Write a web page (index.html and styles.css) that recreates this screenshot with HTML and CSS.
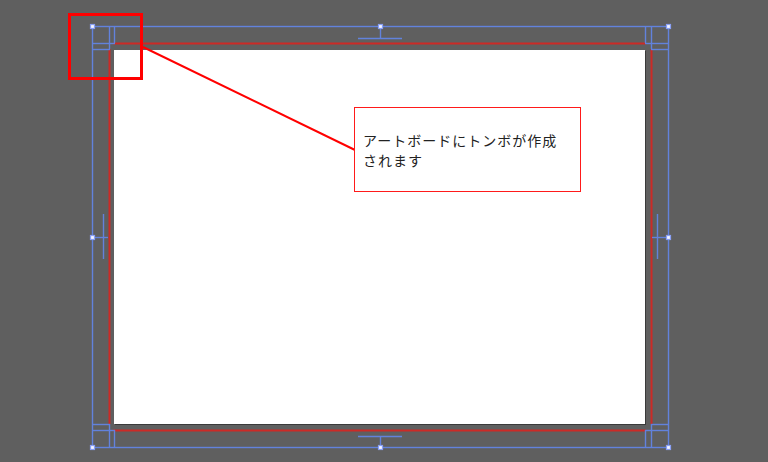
FILE: index.html
```
<!DOCTYPE html>
<html lang="ja">
<head>
  <meta charset="UTF-8" />
  <title>トンボ</title>
  <link rel="stylesheet" href="styles.css">
</head>
<body>
  <div class="stage">
    <svg class="canvas" width="768" height="462" viewBox="0 0 768 462">
      <!-- artboard -->
      <rect x="115" y="51" width="531" height="374" fill="#3a3a3a" />
      <rect x="114" y="50" width="531" height="374" fill="#ffffff" />

      <!-- bleed (red) -->
      <g stroke="#cc2a26" stroke-width="2" fill="none">
        <line x1="113" y1="43.5" x2="646" y2="43.5" />
        <line x1="113" y1="430.5" x2="646" y2="430.5" />
        <line x1="109.5" y1="49" x2="109.5" y2="424" />
        <line x1="651.5" y1="49" x2="651.5" y2="424" />
      </g>

      <!-- crop marks (blue) -->
      <g stroke="#6282dc" stroke-width="1.4" fill="none">
        <rect x="92.5" y="26.5" width="576" height="421" />

        <line x1="114.5" y1="26" x2="114.5" y2="43" />
        <line x1="109.5" y1="26" x2="109.5" y2="49" />
        <line x1="92" y1="43.5" x2="115" y2="43.5" />
        <line x1="92" y1="49.5" x2="110" y2="49.5" />

        <line x1="645.5" y1="26" x2="645.5" y2="43" />
        <line x1="651.5" y1="26" x2="651.5" y2="49" />
        <line x1="645" y1="43.5" x2="668" y2="43.5" />
        <line x1="651" y1="49.5" x2="668" y2="49.5" />

        <line x1="92" y1="424.5" x2="110" y2="424.5" />
        <line x1="92" y1="430.5" x2="115" y2="430.5" />
        <line x1="109.5" y1="424" x2="109.5" y2="447" />
        <line x1="114.5" y1="430" x2="114.5" y2="447" />

        <line x1="651" y1="424.5" x2="668" y2="424.5" />
        <line x1="645" y1="430.5" x2="668" y2="430.5" />
        <line x1="651.5" y1="424" x2="651.5" y2="447" />
        <line x1="645.5" y1="430" x2="645.5" y2="447" />

        <line x1="358" y1="38.5" x2="402" y2="38.5" />
        <line x1="380.5" y1="26" x2="380.5" y2="38" />
        <line x1="358" y1="436.5" x2="402" y2="436.5" />
        <line x1="380.5" y1="436" x2="380.5" y2="447" />

        <line x1="103.5" y1="214" x2="103.5" y2="259" />
        <line x1="92" y1="237.5" x2="108" y2="237.5" />
        <line x1="657.5" y1="214" x2="657.5" y2="259" />
        <line x1="652" y1="237.5" x2="668" y2="237.5" />
      </g>

      <!-- handles -->
      <g fill="#f4f6ff" stroke="#8aa0f4" stroke-width="1.2">
        <rect x="90.5" y="24.5" width="4" height="4" />
        <rect x="378.5" y="24.5" width="4" height="4" />
        <rect x="666.5" y="24.5" width="4" height="4" />
        <rect x="90.5" y="235.5" width="4" height="4" />
        <rect x="666.5" y="235.5" width="4" height="4" />
        <rect x="90.5" y="445.5" width="4" height="4" />
        <rect x="378.5" y="445.5" width="4" height="4" />
        <rect x="666.5" y="445.5" width="4" height="4" />
      </g>

      <!-- annotation -->
      <rect x="69.5" y="14.5" width="72" height="64" fill="none" stroke="#ff0000" stroke-width="3" />
      <line x1="143" y1="47" x2="355" y2="150" stroke="#ff0000" stroke-width="2" />
    </svg>

    <div class="callout">
      <p class="callout-line">アートボードにトンボが作成</p>
      <p class="callout-line">されます</p>
    </div>
  </div>
</body>
</html>
```

FILE: styles.css
```
body {
  margin: 0;
  background: #5f5f5f;
}

.stage {
  position: relative;
  width: 768px;
  height: 462px;
  overflow: hidden;
}

.canvas {
  display: block;
}

.callout {
  position: absolute;
  left: 354px;
  top: 107px;
  width: 227px;
  height: 85px;
  box-sizing: border-box;
  border: 1.5px solid #ff1a1a;
  background: #fff;
  display: flex;
  flex-direction: column;
  justify-content: center;
  padding: 0 8px;
  font-family: "Noto Sans CJK JP", sans-serif;
  font-size: 14px;
  letter-spacing: 1px;
  color: #222;
}

.callout-line {
  margin: 0;
  height: 20px;
  line-height: 20px;
}
```
